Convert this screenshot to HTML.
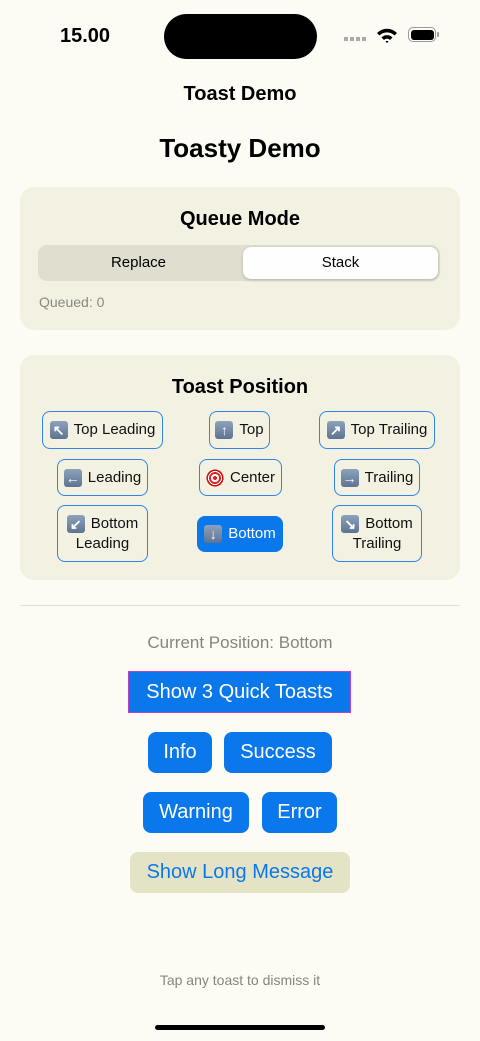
<!DOCTYPE html>
<html><head><meta charset="utf-8"><style>
*{margin:0;padding:0;box-sizing:border-box}
body{width:480px;height:1041px;background:#fcfcf4;font-family:"Liberation Sans",sans-serif;position:relative;overflow:hidden;color:#000}
.a{position:absolute}
.c{text-align:center}
.card{position:absolute;left:20px;width:440px;background:#f2f1e2;border-radius:14px}
.pb{position:absolute;border:1.5px solid #2f86e6;border-radius:8px;display:flex;align-items:center;justify-content:center;font-size:15px;color:#111;text-align:center;line-height:20px}
.ic{display:inline-block;width:18px;height:18px;border-radius:3px;background:linear-gradient(#8da2bb,#5d7391);color:#fff;font-size:14px;line-height:18px;text-align:center;margin-right:6px;vertical-align:middle;font-weight:bold}
.bb{position:absolute;background:#0a78ea;color:#fff;font-size:20px;display:flex;align-items:center;justify-content:center;border-radius:8px}
</style></head><body>
<div class="a" style="left:60px;top:25px;font-size:20px;font-weight:bold">15.00</div>
<div class="a" style="left:164px;top:14px;width:153px;height:45px;background:#000;border-radius:23px"></div>
<div class="a" style="left:344px;top:37px;width:22px;height:4px;background:repeating-linear-gradient(90deg,#aaa 0 4px,transparent 4px 6px)"></div>
<svg class="a" style="left:376px;top:27px" width="22" height="16" viewBox="0 0 22 16"><path d="M1 6 A14 14 0 0 1 21 6 L18.5 8.5 A10.5 10.5 0 0 0 3.5 8.5Z M5.5 10.5 A7.5 7.5 0 0 1 16.5 10.5 L14 13 A4 4 0 0 0 8 13Z M9.5 14.5 L11 16 L12.5 14.5 A2 2 0 0 0 9.5 14.5Z" fill="#000"/></svg>
<div class="a" style="left:408px;top:27px;width:28px;height:15px;border:1.5px solid #999;border-radius:5px;padding:1.5px"><div style="width:100%;height:100%;background:#000;border-radius:3px"></div></div>
<div class="a" style="left:437px;top:32px;width:2px;height:5px;background:#999;border-radius:1px"></div>

<div class="a c" style="left:0;width:480px;top:83px;font-size:20px;font-weight:bold">Toast Demo</div>
<div class="a c" style="left:0;width:480px;top:133px;font-size:26px;font-weight:bold">Toasty Demo</div>

<div class="card" style="top:187px;height:143px"></div>
<div class="a c" style="left:20px;width:440px;top:208px;font-size:20px;font-weight:bold">Queue Mode</div>
<div class="a" style="left:38px;top:245px;width:402px;height:36px;background:#dfdecf;border-radius:9px"></div>
<div class="a c" style="left:38px;top:245px;width:201px;height:36px;line-height:36px;font-size:15px">Replace</div>
<div class="a c" style="left:243px;top:247px;width:195px;height:32px;line-height:32px;font-size:15px;background:#fefefe;border-radius:8px;box-shadow:0 1px 3px rgba(0,0,0,.2)">Stack</div>
<div class="a" style="left:39px;top:294px;font-size:14px;color:#8a8a82">Queued: 0</div>

<div class="card" style="top:355px;height:225px"></div>
<div class="a c" style="left:20px;width:440px;top:376px;font-size:20px;font-weight:bold">Toast Position</div>

<div class="pb" style="left:42px;top:411px;width:121px;height:38px"><span class="ic">↖</span>Top Leading</div>
<div class="pb" style="left:209px;top:411px;width:61px;height:38px"><span class="ic">↑</span>Top</div>
<div class="pb" style="left:319px;top:411px;width:116px;height:38px"><span class="ic">↗</span>Top Trailing</div>
<div class="pb" style="left:57px;top:459px;width:91px;height:37px"><span class="ic">←</span>Leading</div>
<div class="pb" style="left:199px;top:459px;width:83px;height:37px"><span class="ic" style="background:radial-gradient(circle,#d22 0 2px,#fff 2px 4px,#d22 4px 6px,#fff 6px 7px,#c11 7px 8.5px,transparent 8.5px);border-radius:50%">&nbsp;</span>Center</div>
<div class="pb" style="left:334px;top:459px;width:86px;height:37px"><span class="ic">→</span>Trailing</div>
<div class="pb" style="left:57px;top:505px;width:91px;height:57px;flex-direction:column"><div><span class="ic">↙</span>Bottom</div><div>Leading</div></div>
<div class="pb" style="left:197px;top:516px;width:86px;height:36px;background:#0a78ea;border-color:#0a78ea;color:#fff"><span class="ic">↓</span>Bottom</div>
<div class="pb" style="left:332px;top:505px;width:90px;height:57px;flex-direction:column"><div><span class="ic">↘</span>Bottom</div><div>Trailing</div></div>

<div class="a" style="left:20px;top:605px;width:440px;height:1px;background:#e2e1d6"></div>
<div class="a c" style="left:0;width:480px;top:633px;font-size:17px;color:#85857a">Current Position: Bottom</div>

<div class="bb" style="left:128px;top:671px;width:223px;height:42px;border-radius:0;border:1px solid #c040c0">Show 3 Quick Toasts</div>
<div class="bb" style="left:148px;top:732px;width:64px;height:41px">Info</div>
<div class="bb" style="left:224px;top:732px;width:108px;height:41px">Success</div>
<div class="bb" style="left:143px;top:792px;width:106px;height:41px">Warning</div>
<div class="bb" style="left:262px;top:792px;width:75px;height:41px">Error</div>
<div class="bb" style="left:130px;top:852px;width:220px;height:41px;background:#e5e3c6;color:#0a78ea">Show Long Message</div>

<div class="a c" style="left:0;width:480px;top:972px;font-size:14px;color:#86867c">Tap any toast to dismiss it</div>
<div class="a" style="left:155px;top:1025px;width:170px;height:5px;background:#000;border-radius:3px"></div>
</body></html>
